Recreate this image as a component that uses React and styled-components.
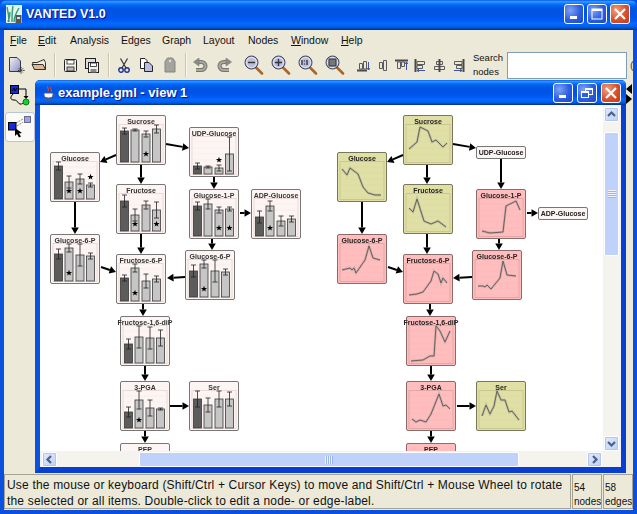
import React from "react";
import styled, { createGlobalStyle } from "styled-components";

const LUNA_TITLE = `linear-gradient(180deg, #0058ee 0%, #3593ff 5%, #288eff 8%, #127dff 11%, #036ffc 15%, #0262ee 20%, #0057e5 28%, #0054e3 40%, #0055eb 58%, #005bf5 68%, #026afe 78%, #0062ef 87%, #0052d6 93%, #0040ab 96%, #003092 100%)`;

const GlobalStyle = createGlobalStyle`
  html, body { margin: 0; padding: 0; background: #ece9d8; overflow: hidden; }
  * { box-sizing: border-box; }
`;

const Frame = styled.div`
  width: 637px;
  height: 514px;
  display: flex;
  flex-direction: column;
  font-family: "Liberation Sans", Arial, sans-serif;
  color: #000;
  background: #0a4fe0;
  overflow: hidden;
`;

const TitleBar = styled.div`
  height: 30px;
  flex: none;
  display: flex;
  align-items: center;
  padding: 0 7px 2px 6px;
  background: ${LUNA_TITLE};
  border-radius: 7px 7px 0 0;
`;

const TitleText = styled.div`
  flex: 1;
  margin-left: ${(p) => p.$ml}px;
  color: #fff;
  font-weight: 700;
  font-size: ${(p) => p.$size}px;
  white-space: nowrap;
  text-shadow: 1px 1px 1px #0f1089;
`;

const WinButtons = styled.div`
  display: flex;
  gap: ${(p) => p.$gap}px;
`;

const WinButton = styled.div`
  width: 20px;
  height: 20px;
  border: 1px solid #fff;
  border-radius: 3px;
  display: flex;
  align-items: center;
  justify-content: center;
  background: ${(p) =>
    p.$close
      ? "radial-gradient(circle at 30% 30%, #f0a080, #d8502c 55%, #c23a14)"
      : "radial-gradient(circle at 30% 30%, #7ea2f4, #2c5ee0 55%, #1c45c8)"};
`;

const Body = styled.div`
  flex: 1;
  min-height: 0;
  margin: 0 4px 4px;
  background: #ece9d8;
  display: flex;
  flex-direction: column;
`;

const MenuBar = styled.div`
  height: 20px;
  flex: none;
  display: flex;
  align-items: center;
  font-size: 10.5px;
`;

const MenuItem = styled.span`
  width: ${(p) => p.$w}px;
  flex: none;
  white-space: nowrap;
  color: #111;
  &:first-child { margin-left: 6px; }
  u { text-underline-offset: 1px; }
`;

const ToolBar = styled.div`
  height: 30px;
  flex: none;
  display: flex;
  align-items: center;
  padding-left: 2px;
  overflow: hidden;
`;

const Group = styled.div`
  display: flex;
  align-items: center;
  margin-left: ${(p) => p.$ml || 0}px;
  & > * { width: ${(p) => p.$size}px; display: flex; justify-content: center; }
`;

const Sep = styled.div`
  width: 2px;
  height: 24px;
  flex: none;
  margin: 0 ${(p) => p.$r}px 0 ${(p) => p.$l}px;
  border-left: 1px solid #c9c6b4;
  border-right: 1px solid #f8f7f0;
`;

const SearchLabel = styled.div`
  width: 30px;
  margin-left: 5px;
  flex: none;
  font-size: 9.5px;
  line-height: 14px;
  color: #111;
`;

const SearchBox = styled.div`
  width: 120px;
  height: 27px;
  flex: none;
  margin-left: 4px;
  background: #fff;
  border: 1px solid #7f9db9;
`;

const ClippedGlyph = styled.span`
  margin-left: 3px;
  font-size: 11px;
  color: #444;
`;

const Workspace = styled.div`
  flex: 1;
  min-height: 0;
  display: flex;
`;

const SideBar = styled.div`
  width: 31px;
  flex: none;
  display: flex;
  flex-direction: column;
  align-items: center;
  padding-top: 5px;
  gap: 3px;
`;

const SideButton = styled.div`
  width: 30px;
  height: ${(p) => (p.$active ? 30 : 24)}px;
  display: flex;
  align-items: center;
  justify-content: center;
  border-radius: 3px;
  ${(p) => p.$active && "background: #fbfaf6; border: 1px solid #b9c4d6;"}
`;

const InnerWindow = styled.div`
  width: 591px;
  flex: none;
  display: flex;
  flex-direction: column;
  background: #0a3fd4;
  border-radius: 5px 5px 0 0;
  border-left: 5px solid #0a52e2;
  border-right: 5px solid #0a3fd4;
  border-bottom: 6px solid #0a3ed0;
`;

const InnerTitle = styled.div`
  height: 25px;
  flex: none;
  display: flex;
  align-items: center;
  margin: 0 -5px;
  padding: 0 5px 0 6px;
  background: ${LUNA_TITLE};
  border-radius: 5px 5px 0 0;
`;

const Divider = styled.div`
  width: 7px;
  flex: none;
  padding-top: 4px;
  display: flex;
  flex-direction: column;
  gap: 0;
`;

const Pane = styled.div`
  flex: 1;
  min-height: 0;
  display: flex;
  flex-direction: column;
`;

const PaneRow = styled.div`
  flex: 1;
  min-height: 0;
  display: flex;
`;

const Canvas = styled.div`
  width: 563px;
  height: 346px;
  position: relative;
  overflow: hidden;
  background: #fff;
`;

const Blurred = styled.div`
  position: absolute;
  inset: 0;
  filter: blur(0.25px);
`;

const EdgeLayer = styled.svg`
  position: absolute;
  left: 0;
  top: 0;
`;

const Node = styled.div`
  position: absolute;
  left: ${(p) => p.$x}px;
  top: ${(p) => p.$y}px;
  width: ${(p) => p.$w || 50}px;
  height: ${(p) => p.$h || 50}px;
  background: ${(p) => p.$bg};
  border: 1px solid ${(p) => p.$line};
  border-radius: 2px;
  display: flex;
  flex-direction: column;
`;

const NodeTitle = styled.div`
  height: 10px;
  margin-bottom: -2px;
  padding-top: 1px;
  position: relative;
  z-index: 1;
  display: flex;
  justify-content: center;
  font-size: 7px;
  line-height: 9px;
  font-weight: 700;
  color: ${(p) => p.$color};
  white-space: nowrap;
`;

const NodeLabel = styled.div`
  flex: 1;
  display: flex;
  align-items: center;
  justify-content: center;
  overflow: hidden;
  font-size: 7px;
  font-weight: 700;
  color: #222;
  white-space: nowrap;
`;

const Plot = styled.svg`
  display: block;
  flex: none;
`;

const VBar = styled.div`
  width: 18px;
  flex: none;
  background: #f4f3ed;
  display: flex;
  flex-direction: column;
  padding: 2px 1px 0;
`;

const HBar = styled.div`
  height: 16px;
  flex: none;
  background: #f4f3ed;
  display: flex;
  padding: 1px 19px 0 2px;
`;

const ScrollBtn = styled.div`
  width: 15px;
  height: 15px;
  flex: none;
  border: 1px solid #fff;
  outline: 1px solid #b4c6ec;
  outline-offset: -2px;
  border-radius: 2px;
  background: linear-gradient(135deg, #e1eafe, #bed0f8);
  display: flex;
  align-items: center;
  justify-content: center;
`;

const ScrollThumb = styled.div`
  flex: none;
  width: ${(p) => (p.$horizontal ? `${p.$len}px` : "15px")};
  height: ${(p) => (p.$horizontal ? "15px" : `${p.$len}px`)};
  margin: ${(p) => (p.$horizontal ? `0 0 0 ${p.$at}px` : `${p.$at}px 0 0`)};
  border: 1px solid #fff;
  border-radius: 2px;
  background: #c0d1fa;
  display: flex;
  align-items: center;
  justify-content: center;
`;

const GripLines = styled.div`
  width: 8px;
  height: 8px;
  background: repeating-linear-gradient(${(p) => (p.$horizontal ? "90deg" : "180deg")}, #eef3fe 0 1px, #9cb4ec 1px 2px);
`;

const Spring = styled.div`
  flex: 1;
`;

const StatusBar = styled.div`
  height: 37px;
  flex: none;
  display: flex;
  gap: 1px;
`;

const StatusMain = styled.div`
  flex: 1;
  margin: 1px 0;
  padding: 2px 1px 0 2px;
  border: 1px solid #a5a291;
  font-size: 12px;
  letter-spacing: 0.18px;
  line-height: 16px;
  color: #111;
  white-space: nowrap;
`;

const StatusCell = styled.div`
  width: ${(p) => p.$w}px;
  margin: 1px 0;
  padding: 6px 0 0 1px;
  border: 1px solid #a5a291;
  flex: none;
  font-size: 10px;
  line-height: 14px;
  color: #111;
  overflow: hidden;
`;

const MinGlyph = () => (
  <svg width="12" height="12"><rect x="2" y="8" width="7" height="3" fill="#fff" /></svg>
);
const MaxGlyph = () => (
  <svg width="14" height="14"><rect x="2" y="2" width="10" height="10" fill="none" stroke="#fff" /><rect x="2" y="2" width="10" height="2" fill="#fff" /></svg>
);
const RestoreGlyph = () => (
  <svg width="14" height="14"><rect x="5.5" y="2.5" width="7" height="6" fill="none" stroke="#fff" /><rect x="5" y="2" width="8" height="2" fill="#fff" /><rect x="1.5" y="5.5" width="7" height="6" fill="#2c5ee0" stroke="#fff" /><rect x="1" y="5" width="8" height="2" fill="#fff" /></svg>
);
const CloseGlyph = () => (
  <svg width="14" height="14"><path d="M2 2 L12 12 M12 2 L2 12" stroke="#fff" strokeWidth="2.2" /></svg>
);

const AppIcon = () => (
  <svg width="16" height="18" viewBox="0 0 16 18">
    <rect width="16" height="18" fill="#e4f3ec" />
    <path d="M3 17 C3 10 2 6 1 2 M6 17 C6 10 6 6 7 1 M8 17 C8 12 10 8 13 3 M2 17 C4 12 4 10 4 7" stroke="#2f9c78" strokeWidth="1.4" fill="none" />
    <rect x="9.5" y="10" width="6" height="8" fill="#555" />
    <rect x="11" y="12" width="3" height="2" fill="#ddd" />
  </svg>
);

const JavaCup = () => (
  <svg width="16" height="16" viewBox="0 0 16 16">
    <path d="M7 1 C5 3 9 4 7 6 M10 2 C8 4 12 5 10 7" stroke="#d8452a" strokeWidth="1.2" fill="none" />
    <path d="M3 8 H12 V10 C12 12 10 13 7.5 13 C5 13 3 12 3 10 Z" fill="#fff" stroke="#4a5a90" />
    <path d="M12 9 H14 V11 H12" fill="none" stroke="#4a5a90" />
    <ellipse cx="7.5" cy="14.5" rx="6" ry="1.2" fill="#4a5a90" />
  </svg>
);

const NewDocIcon = () => (
  <svg width="18" height="20" viewBox="0 0 18 20">
    <defs>
      <linearGradient id="docFill" x1="0" y1="0" x2="1" y2="1">
        <stop offset="0" stopColor="#f2f2fa" />
        <stop offset="1" stopColor="#8a8fc0" />
      </linearGradient>
    </defs>
    <path d="M1.5 2.5 H9 L12.5 6 V16.5 H1.5 Z" fill="url(#docFill)" stroke="#33384f" />
    <path d="M13 12 V19 M10 15.5 H17 M10.8 13.2 L15.2 17.8 M15.2 13.2 L10.8 17.8" stroke="#333" strokeWidth="1" strokeDasharray="1 0.6" />
  </svg>
);

const OpenIcon = () => (
  <svg width="16" height="14" viewBox="0 0 16 14">
    <path d="M1.5 4.5 H6 L13 1.5 L14.5 4.5 V11.5 H3.5 Z" fill="#f3ead7" stroke="#333" />
    <path d="M3.5 11.5 L1 6.5 H12 L14.5 11.5 Z" fill="#e2b78f" stroke="#333" />
  </svg>
);

const FloppyIcon = () => (
  <svg width="13" height="14" viewBox="0 0 13 14">
    <rect x="0.5" y="1.5" width="12" height="12" rx="1" fill="#f4f4ee" stroke="#222" />
    <rect x="3" y="2" width="7" height="4" fill="#fff" stroke="#222" strokeWidth="0.8" />
    <rect x="3" y="9" width="7" height="4" fill="#bbb" stroke="#222" strokeWidth="0.8" />
  </svg>
);

const SaveAllIcon = () => (
  <svg width="14" height="15" viewBox="0 0 14 15">
    <rect x="0.5" y="0.5" width="10" height="10" fill="#ddd" stroke="#222" />
    <rect x="3.5" y="4.5" width="10" height="10" fill="#f4f4ee" stroke="#222" />
    <rect x="5.5" y="5" width="6" height="3.5" fill="#fff" stroke="#222" strokeWidth="0.8" />
    <rect x="5.5" y="11" width="6" height="3.5" fill="#888" />
  </svg>
);

const CutIcon = () => (
  <svg width="12" height="15" viewBox="0 0 12 15">
    <path d="M2.5 0.5 L8 10 M9.5 0.5 L4 10" stroke="#333" strokeWidth="1.2" fill="none" />
    <circle cx="3" cy="12" r="2.2" fill="none" stroke="#1d2f8a" strokeWidth="1.4" />
    <circle cx="9" cy="12" r="2.2" fill="none" stroke="#1d2f8a" strokeWidth="1.4" />
  </svg>
);

const CopyIcon = () => (
  <svg width="13" height="14" viewBox="0 0 13 14">
    <path d="M0.5 0.5 H5 L7 2.5 V10.5 H0.5 Z" fill="#fff" stroke="#222" />
    <path d="M4.5 4.5 H9 L12.5 8 V13.5 H4.5 Z" fill="#b9bde6" stroke="#222" />
  </svg>
);

const PasteIcon = () => (
  <svg width="12" height="16" viewBox="0 0 12 16">
    <path d="M3.5 1 H8.5 L11 4.5 V15 H1 V4.5 Z" fill="#a4a49e" stroke="#85857f" />
    <circle cx="6" cy="4" r="1.2" fill="#e0e0d8" />
  </svg>
);

const TurnIcon = ({ flip }) => (
  <svg width="15" height="15" viewBox="0 0 15 15" transform={flip ? "scale(-1 1)" : undefined}>
    <path d="M4 4 H8 C14 4 14 12 8 12 H3" stroke="#76766f" strokeWidth="4" fill="none" />
    <path d="M4 4 H8 C14 4 14 12 8 12 H3" stroke="#a8a8a2" strokeWidth="2" fill="none" />
    <path d="M6 0 L0.5 4 L6 8 Z" fill="#8c8c86" stroke="#76766f" strokeWidth="0.6" />
  </svg>
);

const ZoomIcon = ({ children }) => (
  <svg width="20" height="20" viewBox="0 0 20 20">
    <path d="M12 12.5 L18 18.5" stroke="#a8672c" strokeWidth="2.6" strokeLinecap="round" />
    <circle cx="7.5" cy="7.5" r="6.5" fill="#b9bcdc" stroke="#3f4258" />
    <circle cx="7.5" cy="7.5" r="5" fill="none" stroke="#e8e8f4" />
    {children}
  </svg>
);

const AlignIcon = ({ d, heavy, arrow }) => (
  <svg width="13" height="13" viewBox="0 0 13 13">
    <path d={d} stroke="#5a5a5a" fill="#ece9d8" />
    <path d={heavy} stroke="#4a4a4a" strokeWidth="2" fill="none" />
    <path d={arrow} stroke="#3a55a5" fill="none" />
  </svg>
);

const NetIcon = () => (
  <svg width="24" height="24" viewBox="0 0 24 24">
    <rect x="2.5" y="0.5" width="8" height="8" fill="#1428e0" stroke="#000" />
    <path d="M4 6 L6 3 L7 6 L9 3" stroke="#000" fill="none" />
    <path d="M10 4 H18 V13" stroke="#000" fill="none" />
    <path d="M15.5 11 H20.5 L18 14 Z" fill="#000" />
    <path d="M5 9 C2 12 2 15 6 15 C10 15 9 18 12 19 C14 19.5 15 18 16 17" stroke="#000" fill="none" />
    <circle cx="18" cy="17" r="3" fill="#18d030" stroke="#0a7a18" />
  </svg>
);

const SelectIcon = () => (
  <svg width="24" height="22" viewBox="0 0 24 22">
    <rect x="16.5" y="0.5" width="6" height="6" fill="#9ca2e6" stroke="#6a6a8a" />
    <path d="M8 7 L15 3 M9 10 L15 6" stroke="#8a8a8a" strokeDasharray="2 1" />
    <rect x="0.5" y="6.5" width="7.5" height="7.5" fill="#1428e0" stroke="#000" />
    <path d="M7 12 L7 20 L9 18 L11 21.5 L13 20.5 L11 17.5 L14 17 Z" fill="#000" />
  </svg>
);

const Triangle = ({ right }) => (
  <svg width="7" height="10" viewBox="0 0 7 10" style={{ display: "block" }}>
    <path d={right ? "M0 0 L6 5 L0 10 Z" : "M6 0 L0 5 L6 10 Z"} fill="#000" />
  </svg>
);

const Chevron = ({ dir }) => {
  const paths = {
    up: "M2 7 L5.5 3.5 L9 7",
    down: "M2 4 L5.5 7.5 L9 4",
    left: "M7 2 L3.5 5.5 L7 9",
    right: "M4 2 L7.5 5.5 L4 9",
  };
  return (
    <svg width="11" height="11" viewBox="0 0 11 11">
      <path d={paths[dir]} stroke="#4d6185" strokeWidth="2.2" fill="none" />
    </svg>
  );
};

const starPoints = (cx, cy, r) => {
  const pts = [];
  for (let i = 0; i < 10; i++) {
    const rad = i % 2 ? r * 0.42 : r;
    const a = (Math.PI / 5) * i - Math.PI / 2;
    pts.push(`${(cx + rad * Math.cos(a)).toFixed(2)},${(cy + rad * Math.sin(a)).toFixed(2)}`);
  }
  return pts.join(" ");
};

const barX = [4.5, 15, 26, 36.5];

const PlotFrame = ({ stroke, grid, children }) => (
  <Plot width="48" height="40" viewBox="1 9 48 40">
    <rect x="3" y="9.5" width="44" height="38" fill="none" stroke={stroke} />
    {[15, 21, 27, 33, 39, 45].map((y) => (
      <line key={y} x1="3" x2="47" y1={y} y2={y} stroke={grid} strokeWidth="0.5" />
    ))}
    {children}
  </Plot>
);

const BarPlot = ({ bars }) => (
  <PlotFrame stroke="#ead9d4" grid="#f6e9e6">
    {bars.map(([top, err, star], i) => {
      const cx = barX[i] + 4;
      return (
        <g key={i}>
          <rect x={barX[i]} y={top} width="8" height={47 - top} fill={i === 0 ? "#5c5c5c" : "#c6c6c6"} stroke="#3a3a3a" strokeWidth="0.8" />
          <path d={`M${cx} ${top - err} V${top + err} M${cx - 2.5} ${top - err} H${cx + 2.5} M${cx - 2.5} ${top + err} H${cx + 2.5}`} stroke="#222" strokeWidth="0.8" fill="none" />
          {star && <polygon points={starPoints(cx, star, 3.2)} fill="#000" />}
        </g>
      );
    })}
  </PlotFrame>
);

const LinePlot = ({ line, kind }) => {
  const pts = line.map((p) => p.join(",")).join(" ");
  const tint = kind === "pink" ? "#e3a6a6" : "#c8c88e";
  return (
    <PlotFrame stroke={tint} grid={kind === "pink" ? "#f7b4b4" : "#d6d69c"}>
      <polyline points={pts} fill="none" stroke="#888" strokeWidth="2.4" opacity="0.35" />
      <polyline points={pts} fill="none" stroke="#5a5a5a" strokeWidth="0.9" />
    </PlotFrame>
  );
};

const leftNodes = [
  { name: "Sucrose", x: 76, y: 10, bars: [[16, 3], [15, 1], [19, 3, 39], [14, 4]] },
  { name: "Glucose", x: 10, y: 47, bars: [[14, 4], [30, 6, 39], [27, 5, 39], [33, 2, 25]] },
  { name: "UDP-Glucose", x: 149, y: 22, bars: [[39, 3], [40, 1], [41, 3, 33], [27, 17]] },
  { name: "Fructose", x: 76, y: 79, bars: [[17, 6], [31, 6, 40], [21, 4], [26, 8, 40]] },
  { name: "Glucose-1-P", x: 149, y: 84, bars: [[17, 4], [15, 5], [21, 3, 39], [20, 2, 39]] },
  { name: "ADP-Glucose", x: 211, y: 84, bars: [[28, 6], [17, 5, 39], [32, 5], [30, 3]] },
  { name: "Glucose-6-P", x: 10, y: 129, bars: [[20, 5], [14, 4, 39], [21, 11], [22, 3]] },
  { name: "Fructose-6-P", x: 76, y: 149, bars: [[24, 3], [14, 4, 39], [27, 7], [25, 3]] },
  { name: "Glucose-6-P", x: 145, y: 145, bars: [[21, 6], [14, 4, 39], [21, 11], [22, 3]] },
  { name: "Fructose-1,6-diP", x: 80, y: 211, bars: [[28, 5], [21, 11], [22, 11], [22, 8]] },
  { name: "3-PGA", x: 80, y: 276, bars: [[31, 5], [19, 9, 39], [27, 8], [28, 1]] },
  { name: "Ser", x: 149, y: 276, bars: [[18, 8], [24, 7], [18, 8], [18, 7]] },
  { name: "PEP", x: 80, y: 338, bars: [] },
];

const rightNodes = [
  { name: "Sucrose", x: 363, y: 10, kind: "yellow", line: [[6, 34], [14, 27], [17, 12], [21, 14], [25, 16], [29, 27], [33, 25], [40, 32], [44, 28]] },
  { name: "Glucose", x: 297, y: 47, kind: "yellow", line: [[5, 17], [10, 23], [13, 16], [21, 22], [26, 35], [31, 41], [38, 43], [44, 43]] },
  { name: "UDP-Glucose", x: 436, y: 41, label: true },
  { name: "Fructose", x: 363, y: 79, kind: "yellow", line: [[6, 24], [10, 28], [14, 15], [21, 37], [28, 40], [35, 37], [43, 43]] },
  { name: "Glucose-1-P", x: 436, y: 84, kind: "pink", line: [[6, 42], [14, 44], [27, 43], [30, 17], [40, 12], [44, 21]] },
  { name: "ADP-Glucose", x: 498, y: 102, label: true },
  { name: "Glucose-6-P", x: 297, y: 129, kind: "pink", line: [[5, 36], [13, 34], [15, 36], [17, 34], [19, 39], [28, 26], [32, 12], [36, 24], [43, 26]] },
  { name: "Fructose-6-P", x: 363, y: 149, kind: "pink", line: [[6, 41], [14, 40], [20, 38], [28, 27], [31, 17], [35, 20], [38, 29], [40, 24], [44, 29]] },
  { name: "Glucose-6-P", x: 432, y: 145, kind: "pink", line: [[6, 36], [11, 36], [13, 37], [15, 35], [19, 39], [28, 28], [31, 11], [35, 25], [44, 26]] },
  { name: "Fructose-1,6-diP", x: 366, y: 211, kind: "pink", line: [[5, 45], [17, 44], [24, 40], [28, 40], [30, 10], [34, 15], [39, 26], [44, 15]] },
  { name: "3-PGA", x: 366, y: 276, kind: "pink", line: [[6, 38], [10, 41], [14, 39], [20, 41], [25, 33], [33, 13], [37, 25], [40, 24], [44, 28]] },
  { name: "Ser", x: 436, y: 276, kind: "yellow", line: [[6, 35], [10, 24], [14, 33], [18, 25], [21, 10], [25, 19], [29, 19], [33, 31], [36, 30], [43, 39]] },
  { name: "PEP", x: 366, y: 338, kind: "pink", line: [] },
];

// x1 y1 x2 y2 in canvas coordinates
const edges = [
  [126, 39, 149, 43], [76, 50, 60, 57], [101, 60, 101, 79], [174, 72, 174, 84], [200, 108, 211, 108],
  [35, 97, 35, 129], [172, 134, 172, 145], [101, 129, 101, 149], [61, 162, 76, 167], [145, 172, 127, 173],
  [103, 199, 103, 211], [105, 261, 105, 276], [130, 301, 149, 301], [105, 326, 105, 338],
  [413, 39, 436, 43], [363, 50, 347, 57], [387, 60, 387, 79], [461, 54, 461, 84], [487, 108, 498, 108],
  [322, 97, 322, 129], [459, 134, 459, 145], [387, 129, 387, 149], [348, 162, 363, 167], [432, 172, 413, 173],
  [390, 199, 390, 211], [391, 261, 391, 276], [417, 301, 436, 301], [391, 326, 391, 338],
];

const Arrow = ({ edge }) => {
  const [x1, y1, x2, y2] = edge;
  const a = Math.atan2(y2 - y1, x2 - x1);
  const bx = x2 - 6.5 * Math.cos(a);
  const by = y2 - 6.5 * Math.sin(a);
  const nx = 3.8 * Math.sin(a);
  const ny = 3.8 * Math.cos(a);
  return (
    <g>
      <line x1={x1} y1={y1} x2={bx} y2={by} stroke="#000" strokeWidth="2" />
      <polygon points={`${x2},${y2} ${bx + nx},${by - ny} ${bx - nx},${by + ny}`} fill="#000" />
    </g>
  );
};

const kinds = {
  plain: { bg: "#fcf5f3", line: "#777", title: "#333" },
  yellow: { bg: "#dfdfa6", line: "#77775a", title: "#222" },
  pink: { bg: "#ffbdbd", line: "#8c6a6a", title: "#222" },
};

const GraphNode = ({ node }) => {
  const kind = kinds[node.kind || "plain"];
  if (node.label) {
    return (
      <Node $x={node.x} $y={node.y} $w={50} $h={13} $bg={kinds.plain.bg} $line={kind.line}>
        <NodeLabel>{node.name}</NodeLabel>
      </Node>
    );
  }
  return (
    <Node $x={node.x} $y={node.y} $bg={kind.bg} $line={kind.line}>
      <NodeTitle $color={kind.title}>{node.name}</NodeTitle>
      {node.bars ? <BarPlot bars={node.bars} /> : <LinePlot line={node.line} kind={node.kind} />}
    </Node>
  );
};

const menus = [
  ["File", 28, "F"],
  ["Edit", 32, "E"],
  ["Analysis", 51],
  ["Edges", 41],
  ["Graph", 41],
  ["Layout", 45],
  ["Nodes", 43],
  ["Window", 50, "W"],
  ["Help", 30, "H"],
];

const alignIcons = [
  { d: "M2.5 10 V4.5 H5.5 V10 Z M6.5 10 V2.5 H9.5 V10 Z", heavy: "M0 11.5 H10", arrow: "M11.5 3 V11 M10 9 L11.5 11 L13 9" },
  { d: "M3.5 3.5 H6.5 V9.5 H3.5 Z M7.5 1.5 H10.5 V11.5 H7.5 Z", heavy: "", arrow: "" },
  { d: "M2.5 3 V9.5 H5.5 V3 Z M6.5 3 V7.5 H9.5 V3 Z", heavy: "M0 1.5 H13", arrow: "M11.5 11 V3 M10 5 L11.5 3 L13 5" },
  { d: "M3 2.5 H10.5 V5.5 H3 Z M3 6.5 H8.5 V9.5 H3 Z", heavy: "M1.5 0 V13", arrow: "M3 11.5 H11 M5 10 L3 11.5 L5 13" },
  { d: "M3.5 2.5 H9.5 V5.5 H3.5 Z M1.5 7.5 H11.5 V10.5 H1.5 Z", heavy: "M6.5 0 V13", arrow: "" },
  { d: "M10 2.5 H2.5 V5.5 H10 Z M10 6.5 H4.5 V9.5 H10 Z", heavy: "M11.5 0 V13", arrow: "M2 11.5 H10 M8 10 L10 11.5 L8 13" },
];

const App = () => (
  <Frame>
    <GlobalStyle />
    <TitleBar>
      <AppIcon />
      <TitleText $size={12.5} $ml={4}>VANTED V1.0</TitleText>
      <WinButtons $gap={3}>
        <WinButton><MinGlyph /></WinButton>
        <WinButton><MaxGlyph /></WinButton>
        <WinButton $close><CloseGlyph /></WinButton>
      </WinButtons>
    </TitleBar>
    <Body>
      <MenuBar>
        {menus.map(([name, w, key]) => (
          <MenuItem key={name} $w={w}>
            {key ? <><u>{key}</u>{name.slice(1)}</> : name}
          </MenuItem>
        ))}
      </MenuBar>
      <ToolBar>
        <Group $size={22}>
          <span><NewDocIcon /></span>
          <span><OpenIcon /></span>
        </Group>
        <Sep $l={4} $r={3} />
        <Group $size={22}>
          <span><FloppyIcon /></span>
          <span><SaveAllIcon /></span>
        </Group>
        <Sep $l={5} $r={2} />
        <Group $size={23}>
          <span><CutIcon /></span>
          <span><CopyIcon /></span>
          <span><PasteIcon /></span>
        </Group>
        <Sep $l={4} $r={1} />
        <Group $size={24}>
          <span><TurnIcon /></span>
          <span><TurnIcon flip /></span>
        </Group>
        <Group $size={27} $ml={4}>
          <span>
            <ZoomIcon><path d="M4 7.5 H11" stroke="#333" strokeWidth="1.4" /></ZoomIcon>
          </span>
          <span>
            <ZoomIcon><path d="M4 7.5 H11 M7.5 4 V11" stroke="#333" strokeWidth="1.4" /></ZoomIcon>
          </span>
          <span>
            <ZoomIcon><path d="M4 5 V10 M6.5 5.5 V6.5 M6.5 8.5 V9.5 M9 5 V10" stroke="#222" strokeWidth="1.2" /></ZoomIcon>
          </span>
          <span>
            <ZoomIcon><rect x="4" y="4" width="7" height="7" fill="#777" stroke="#333" /></ZoomIcon>
          </span>
        </Group>
        <Group $size={19} $ml={6}>
          {alignIcons.map((icon, i) => (
            <span key={i}><AlignIcon d={icon.d} heavy={icon.heavy} arrow={icon.arrow} /></span>
          ))}
        </Group>
        <SearchLabel>Search<br />nodes</SearchLabel>
        <SearchBox />
        <ClippedGlyph>(</ClippedGlyph>
      </ToolBar>
      <Workspace>
        <SideBar>
          <SideButton><NetIcon /></SideButton>
          <SideButton $active><SelectIcon /></SideButton>
        </SideBar>
        <InnerWindow>
          <InnerTitle>
            <JavaCup />
            <TitleText $size={13} $ml={1}>example.gml - view 1</TitleText>
            <WinButtons $gap={4}>
              <WinButton><MinGlyph /></WinButton>
              <WinButton><RestoreGlyph /></WinButton>
              <WinButton $close><CloseGlyph /></WinButton>
            </WinButtons>
          </InnerTitle>
          <Pane>
            <PaneRow>
              <Canvas>
                <Blurred>
                  <EdgeLayer width="563" height="346">
                    {edges.map((edge, i) => <Arrow key={i} edge={edge} />)}
                  </EdgeLayer>
                  {leftNodes.map((n, i) => <GraphNode key={i} node={n} />)}
                  {rightNodes.map((n, i) => <GraphNode key={i} node={n} />)}
                </Blurred>
              </Canvas>
              <VBar>
                <ScrollBtn><Chevron dir="up" /></ScrollBtn>
                <ScrollThumb $len={124} $at={10}><GripLines /></ScrollThumb>
                <Spring />
                <ScrollBtn><Chevron dir="down" /></ScrollBtn>
              </VBar>
            </PaneRow>
            <HBar>
              <ScrollBtn><Chevron dir="left" /></ScrollBtn>
              <ScrollThumb $horizontal $len={380} $at={82}><GripLines $horizontal /></ScrollThumb>
              <Spring />
              <ScrollBtn><Chevron dir="right" /></ScrollBtn>
            </HBar>
          </Pane>
        </InnerWindow>
        <Divider>
          <Triangle />
          <Triangle right />
        </Divider>
      </Workspace>
      <StatusBar>
        <StatusMain>
          Use the mouse or keyboard (Shift/Ctrl + Cursor Keys) to move and Shift/Ctrl + Mouse Wheel to rotate
          <br />
          the selected or all items. Double-click to edit a node- or edge-label.
        </StatusMain>
        <StatusCell $w={30}>54<br />nodes</StatusCell>
        <StatusCell $w={30}>58<br />edges</StatusCell>
      </StatusBar>
    </Body>
  </Frame>
);

export default App;
